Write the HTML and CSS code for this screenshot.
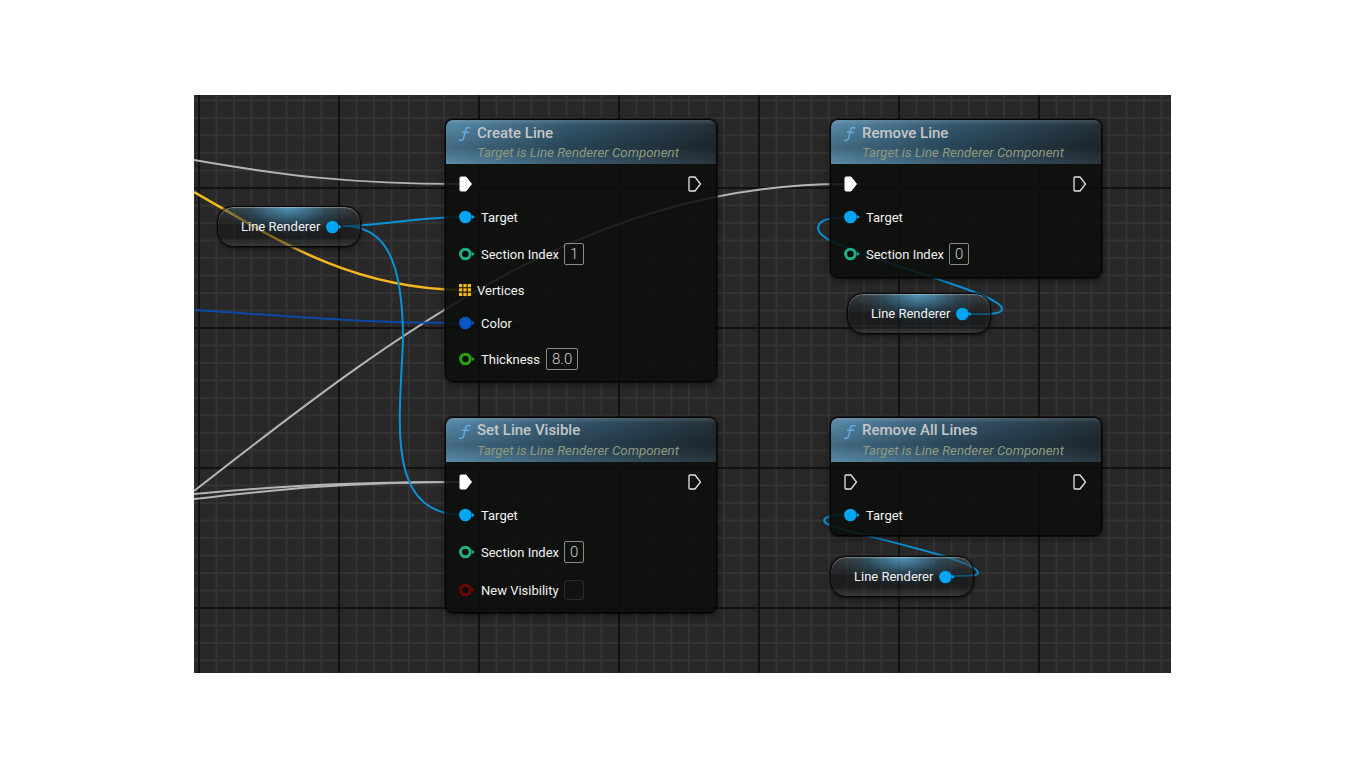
FILE: index.html
```html
<!DOCTYPE html>
<html lang="en">
<head>
    <meta charset="UTF-8">
    <title>Line Renderer Blueprint</title>
    <link rel="stylesheet" href="styles.css">
</head>
<body>
    <svg class="defs" width="0" height="0">
        <defs>
            <symbol id="exec-on" viewBox="0 0 14 16"><path d="M2 1h5l5.500 7L7 15H2q-1 0-1-1V2q0-1 1-1z" fill="#fff" stroke="#fff"/></symbol>
            <symbol id="exec-off" viewBox="0 0 14 16"><path d="M2 1h5l5.500 7L7 15H2q-1 0-1-1V2q0-1 1-1z" fill="none" stroke="#e4e4e4" stroke-width="1.300"/></symbol>
            <symbol id="pin-full" viewBox="0 0 16 14"><circle cx="6.400" cy="7" r="6.300" fill="currentColor"/><path d="M13 5l2.800 2-2.800 2z" fill="currentColor"/></symbol>
            <symbol id="pin-ring" viewBox="0 0 16 14"><circle cx="6.400" cy="7" r="4.800" fill="#0b0d0b" stroke="currentColor" stroke-width="3"/><path d="M13 5l2.800 2-2.800 2z" fill="currentColor"/></symbol>
            <symbol id="pin-array" viewBox="0 0 12 12"><path d="M0 0h3.300v3.300H0zM4.300 0h3.300v3.300H4.300zM8.700 0H12v3.300H8.700zM0 4.300h3.300v3.300H0zM4.300 4.300h3.300v3.300H4.300zM8.700 4.300H12v3.300H8.700zM0 8.700h3.300V12H0zM4.300 8.700h3.300V12H4.300zM8.700 8.700H12V12H8.700z" fill="#f5b81f"/></symbol>
            <symbol id="fn-mark" viewBox="0 0 14 16"><path d="M12.500 2.200C10.500.8 8.300 1.200 7.700 3.500L5.800 11.500C5.200 14.200 3.500 15 1 14M4 6.300h7" fill="none" stroke="#62acdf" stroke-width="1.500"/></symbol>
        </defs>
    </svg>

    <div class="canvas">
        <!-- cables run under the nodes, node bodies let them show through -->
        <svg class="wires" width="977" height="578" viewBox="194 95 977 578">
            <g fill="none" stroke-width="2">
                <path stroke="#b5b5b5" d="M194 160C280 175 350 184 460 184"/>
                <path stroke="#b5b5b5" d="M194 491C400 330 590 184 845 184"/>
                <path stroke="#b5b5b5" d="M194 494C280 486 350 482 460 482"/>
                <path stroke="#b5b5b5" d="M194 499C280 489 350 482 460 482"/>
                <path stroke="#f5b81f" stroke-width="2.500" d="M194 192C270 235 345 288 460 290"/>
                <path stroke="#0c48a8" d="M194 310C290 316 360 323 460 323"/>
                <path stroke="#0a92d8" d="M343 226C380 226 410 218 460 217"/>
                <path stroke="#0a92d8" d="M343 226C380 226 403 250 403 340C400 420 385 512 460 515"/>
                <path stroke="#0a92d8" d="M850 217C805 217 815 235 835 243C900 270 1002 295 1002 309C1002 315 985 314 968 314"/>
                <path stroke="#0a92d8" d="M848 515C828 514 815 520 832 526C870 538 978 560 978 573C978 576 965 576 950 576"/>
            </g>
        </svg>

        <section class="node node-create">
            <header class="node-head">
                <svg class="fn"><use href="#fn-mark"/></svg>
                <h2>Create Line</h2>
                <p>Target is Line Renderer Component</p>
            </header>
            <div class="row row-exec">
                <svg class="exec"><use href="#exec-on"/></svg>
                <svg class="exec"><use href="#exec-off"/></svg>
            </div>
            <div class="row"><svg class="pin blue"><use href="#pin-full"/></svg>Target</div>
            <div class="row gap-17"><svg class="pin teal"><use href="#pin-ring"/></svg>Section Index<span class="field">1</span></div>
            <div class="row gap-16"><svg class="array"><use href="#pin-array"/></svg>Vertices</div>
            <div class="row"><svg class="pin navy"><use href="#pin-full"/></svg>Color</div>
            <div class="row gap-16"><svg class="pin green"><use href="#pin-ring"/></svg>Thickness<span class="field field-wide">8.0</span></div>
        </section>

        <section class="node node-visible">
            <header class="node-head">
                <svg class="fn"><use href="#fn-mark"/></svg>
                <h2>Set Line Visible</h2>
                <p>Target is Line Renderer Component</p>
            </header>
            <div class="row row-exec">
                <svg class="exec"><use href="#exec-on"/></svg>
                <svg class="exec"><use href="#exec-off"/></svg>
            </div>
            <div class="row"><svg class="pin blue"><use href="#pin-full"/></svg>Target</div>
            <div class="row gap-17"><svg class="pin teal"><use href="#pin-ring"/></svg>Section Index<span class="field">0</span></div>
            <div class="row gap-18"><svg class="pin maroon"><use href="#pin-ring"/></svg>New Visibility<span class="check"></span></div>
        </section>

        <section class="node node-remove">
            <header class="node-head">
                <svg class="fn"><use href="#fn-mark"/></svg>
                <h2>Remove Line</h2>
                <p>Target is Line Renderer Component</p>
            </header>
            <div class="row row-exec">
                <svg class="exec"><use href="#exec-on"/></svg>
                <svg class="exec"><use href="#exec-off"/></svg>
            </div>
            <div class="row"><svg class="pin blue"><use href="#pin-full"/></svg>Target</div>
            <div class="row gap-17"><svg class="pin teal"><use href="#pin-ring"/></svg>Section Index<span class="field">0</span></div>
        </section>

        <section class="node node-remove-all">
            <header class="node-head">
                <svg class="fn"><use href="#fn-mark"/></svg>
                <h2>Remove All Lines</h2>
                <p>Target is Line Renderer Component</p>
            </header>
            <div class="row row-exec">
                <svg class="exec"><use href="#exec-off"/></svg>
                <svg class="exec"><use href="#exec-off"/></svg>
            </div>
            <div class="row"><svg class="pin blue"><use href="#pin-full"/></svg>Target</div>
        </section>

        <div class="pill pill-a">Line Renderer<svg class="pin blue"><use href="#pin-full"/></svg></div>
        <div class="pill pill-b">Line Renderer<svg class="pin blue"><use href="#pin-full"/></svg></div>
        <div class="pill pill-c">Line Renderer<svg class="pin blue"><use href="#pin-full"/></svg></div>
    </div>
</body>
</html>
```

FILE: styles.css
```css
body {
    margin: 0;
    background-color: #fff;
    font-family: Roboto, "Liberation Sans", sans-serif;
}
.defs {
    position: absolute;
}
.canvas {
    position: relative;
    width: 977px;
    height: 578px;
    margin: 95px 0 0 194px;
    overflow: hidden;
    background-color: #282828;
    background-image:
        linear-gradient(90deg, #121212 2px, transparent 2px),
        linear-gradient(#121212 2px, transparent 2px),
        linear-gradient(90deg, #343434 2px, transparent 2px),
        linear-gradient(#343434 2px, transparent 2px);
    background-size: 140px 100%, 100% 140px, 17.5px 100%, 100% 17.5px;
    background-position: 4px 0, 0 92px, 4px 0, 0 4.5px;
}
.wires {
    position: absolute;
    left: 0;
    top: 0;
}

/* nodes */
.node {
    position: absolute;
    box-sizing: border-box;
    width: 272px;
    border: 1px solid #050505;
    border-radius: 8px;
    background-color: rgba(10, 14, 10, .88);
    box-shadow: 0 0 0 1px rgba(0, 0, 0, .45), 0 2px 7px rgba(0, 0, 0, .55);
    color: #f2f2f2;
    font-size: 13px;
}
.node-create { left: 251px; top: 24px; height: 263px; }
.node-visible { left: 251px; top: 322px; height: 196px; }
.node-remove { left: 636px; top: 24px; height: 159px; }
.node-remove-all { left: 636px; top: 322px; height: 119px; }

.node-head {
    position: relative;
    box-sizing: border-box;
    height: 44px;
    margin-bottom: 10px;
    padding: 5px 0 0 31px;
    border-radius: 7px 7px 0 0;
    background-image:
        linear-gradient(rgba(255, 255, 255, .14), transparent 12%, rgba(0, 0, 0, .22) 62%, rgba(255, 255, 255, .04)),
        linear-gradient(90deg, #5587a6, #33566c 45%, #222f38);
}
.node-visible .node-head,
.node-remove-all .node-head {
    padding-top: 4px;
}
.node-visible .node-head p,
.node-remove-all .node-head p {
    margin-top: 5px;
}
.node-head h2 {
    margin: 0;
    font-size: 15px;
    line-height: 16px;
    font-weight: 500;
    color: #c6c6c6;
}
.node-head p {
    margin: 4px 0 0;
    font-size: 13.3px;
    line-height: 15px;
    font-style: italic;
    color: #8f9a80;
}
.fn {
    position: absolute;
    left: 12px;
    top: 6px;
    width: 14px;
    height: 16px;
}

/* pin rows */
.row {
    display: flex;
    align-items: center;
    height: 20px;
    margin-top: 13px;
    padding: 0 14px 0 13px;
}
.row-exec {
    justify-content: space-between;
    margin-top: 0;
}
.gap-16 { margin-top: 16px; }
.gap-17 { margin-top: 17px; }
.gap-18 { margin-top: 18px; }

.exec {
    width: 14px;
    height: 16px;
}
.pin {
    flex: none;
    width: 16px;
    height: 14px;
    margin-right: 6px;
}
.array {
    width: 12px;
    height: 12px;
    margin-right: 6px;
}
.blue { color: #00a5f2; }
.teal { color: #1fae88; }
.navy { color: #0a56c4; }
.green { color: #2ba30e; }
.maroon { color: #6e0505; }

.field {
    margin-left: 5px;
    padding: 0 5px;
    border: 1px solid #8c8c8c;
    border-radius: 2px;
    font-size: 15px;
    font-weight: 300;
    line-height: 20px;
    color: #cfcfcf;
}
.field-wide {
    margin-left: 6px;
}
.check {
    width: 18px;
    height: 18px;
    margin-left: 5px;
    border: 1px solid #2c2c2c;
    border-radius: 3px;
    background-color: #121212;
}

/* variable getters */
.pill {
    position: absolute;
    box-sizing: border-box;
    display: flex;
    align-items: center;
    width: 144px;
    height: 41px;
    padding-left: 23px;
    border: 1px solid #050505;
    border-radius: 16px;
    background-image:
        radial-gradient(ellipse 46% 75% at 50% 0, rgba(90, 185, 235, .72), rgba(40, 110, 150, .3) 60%, transparent),
        linear-gradient(rgba(75, 80, 82, .5), rgba(14, 18, 20, .52) 50%, rgba(16, 18, 20, .5) 78%, rgba(70, 72, 72, .5));
    box-shadow: 0 2px 5px rgba(0, 0, 0, .45), 0 0 0 1px rgba(0, 0, 0, .3), inset 0 1px 1px rgba(255, 255, 255, .35);
    color: #f2f2f2;
    font-size: 13px;
}
.pill .pin {
    margin: 0 0 0 6px;
}
.pill-a { left: 23px; top: 111px; }
.pill-b { left: 653px; top: 198px; }
.pill-c { left: 636px; top: 461px; }
```
